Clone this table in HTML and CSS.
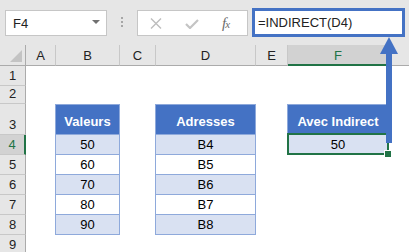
FILE: index.html
```html
<!DOCTYPE html>
<html lang="fr">
<head>
<meta charset="utf-8">
<title>INDIRECT</title>
<link rel="stylesheet" href="styles.css">
</head>
<body>
<div class="app">
  <div class="toolbar">
    <div class="namebox">
      <span>F4</span>
      <svg class="caret" width="8" height="4" viewBox="0 0 8 4"><polygon points="0,0 8,0 4,4" fill="#707070"/></svg>
    </div>
    <div class="grip"><i></i><i></i><i></i></div>
    <div class="fnbox">
      <svg class="ico-x" width="12" height="11" viewBox="0 0 12 11"><path d="M1 0.5 L11 10.5 M11 0.5 L1 10.5" stroke="#bdbdbd" stroke-width="1.4" fill="none"/></svg>
      <svg class="ico-ok" width="14" height="10" viewBox="0 0 14 10"><path d="M1 5 L5 9 L13 1" stroke="#c4c4c4" stroke-width="2.2" fill="none"/></svg>
      <span class="fx">f<small>x</small></span>
    </div>
    <div class="formula">=INDIRECT(D4)</div>
  </div>

  <div class="colheads">
    <div class="ch corner"><svg width="25" height="20" viewBox="0 0 25 20"><polygon points="22,5 22,17 10,17" fill="#c3c3c3"/></svg></div>
    <div class="ch">A</div>
    <div class="ch">B</div>
    <div class="ch">C</div>
    <div class="ch">D</div>
    <div class="ch">E</div>
    <div class="ch active">F</div>
    <div class="ch last"></div>
  </div>

  <div class="sheet">
    <div class="row"><div class="rh">1</div></div>
    <div class="row r2"><div class="rh">2</div></div>
    <div class="row r3">
      <div class="rh">3</div><div></div>
      <div class="t th">Valeurs</div><div></div>
      <div class="t th">Adresses</div><div></div>
      <div class="t th">Avec Indirect</div>
    </div>
    <div class="row">
      <div class="rh act">4</div><div></div>
      <div class="t alt">50</div><div></div>
      <div class="t alt">B4</div><div></div>
      <div class="t alt sel">50</div>
    </div>
    <div class="row">
      <div class="rh">5</div><div></div>
      <div class="t">60</div><div></div>
      <div class="t">B5</div>
    </div>
    <div class="row">
      <div class="rh">6</div><div></div>
      <div class="t alt">70</div><div></div>
      <div class="t alt">B6</div>
    </div>
    <div class="row">
      <div class="rh">7</div><div></div>
      <div class="t">80</div><div></div>
      <div class="t">B7</div>
    </div>
    <div class="row">
      <div class="rh">8</div><div></div>
      <div class="t alt">90</div><div></div>
      <div class="t alt">B8</div>
    </div>
    <div class="row"><div class="rh">9</div></div>
  </div>

  <svg class="arrow" width="409" height="252" viewBox="0 0 409 252">
    <rect x="386" y="52" width="6" height="91" fill="#4472C4"/>
    <polygon points="389,37 380,54 398,54" fill="#4472C4"/>
  </svg>
</div>
</body>
</html>
```

FILE: styles.css
```css
* {
  box-sizing: border-box;
  margin: 0;
  padding: 0;
}

body {
  margin: 0;
  width: 409px;
  height: 252px;
  overflow: hidden;
  background: #fff;
  font-family: "Liberation Sans", Arial, sans-serif;
  font-size: 13px;
  color: #000;
}

.app {
  position: relative;
  width: 409px;
  height: 252px;
  overflow: hidden;
}

/* ---------- toolbar ---------- */
.toolbar {
  height: 45px;
  background: #e6e6e6;
  display: flex;
  align-items: flex-start;
  padding: 10px 0 0 5px;
}

.namebox {
  width: 102px;
  height: 26px;
  background: #fff;
  border: 1px solid #c6c6c6;
  display: flex;
  align-items: center;
  justify-content: space-between;
  padding: 0 6px 0 7px;
  color: #222;
}

.caret {
  margin-top: -2px;
}

.grip {
  width: 30px;
  height: 26px;
  display: flex;
  flex-direction: column;
  align-items: center;
  gap: 2px;
  padding-top: 7px;
}

.grip i {
  display: block;
  width: 2px;
  height: 2px;
  background: #a6a6a6;
}

.fnbox {
  width: 111px;
  height: 26px;
  background: #fff;
  border: 1px solid #c6c6c6;
  display: flex;
  align-items: center;
  padding-left: 12px;
}

.ico-x {
  margin-top: 1px;
}

.ico-ok {
  margin-left: 23px;
  margin-top: 2px;
}

.fx {
  margin-left: 23px;
  font-family: "Liberation Serif", "Times New Roman", serif;
  font-style: italic;
  font-size: 15px;
  color: #6b6b6b;
  letter-spacing: -1px;
}

.fx small {
  font-size: 11px;
}

.formula {
  margin-left: 4px;
  margin-top: -2px;
  width: 153px;
  height: 29px;
  background: #fff;
  border: 3px solid #4472C4;
  padding-left: 3px;
  line-height: 23px;
  color: #222;
}

/* ---------- column headers ---------- */
.colheads {
  display: grid;
  grid-template-columns: 26px 30px 64px 36px 100px 32px 101px 1fr;
  height: 21px;
  background: #e6e6e6;
}

.ch {
  border-right: 1px solid #c8c8c8;
  border-bottom: 1px solid #ababab;
  display: flex;
  align-items: center;
  justify-content: center;
  color: #222;
  padding-top: 1px;
}

.ch.corner {
  border-right-color: #ababab;
  padding: 0;
  align-items: flex-start;
  justify-content: flex-start;
}

.ch.active {
  background: #d2d2d2;
  color: #217346;
  border-bottom: 2px solid #217346;
}

.ch.last {
  border-right: none;
}

/* ---------- sheet ---------- */
.row {
  display: grid;
  grid-template-columns: 26px 29px 65px 35px 101px 31px 102px 1fr;
  height: 20px;
}

.row.r2 {
  height: 18px;
}

.row.r3 {
  height: 31px;
}

.rh {
  background: #e6e6e6;
  border-right: 1px solid #ababab;
  border-bottom: 1px solid #c8c8c8;
  display: flex;
  align-items: flex-end;
  justify-content: center;
  padding-bottom: 2px;
  color: #222;
  line-height: 15px;
}

.rh.act {
  background: #d2d2d2;
  color: #217346;
  border-right: 2px solid #217346;
}

.t {
  border-left: 1px solid #8ea9db;
  border-right: 1px solid #8ea9db;
  border-bottom: 1px solid #8ea9db;
  display: flex;
  align-items: center;
  justify-content: center;
  color: #000;
}

.t.th {
  background: #4472c4;
  border-top: 1px solid #8ea9db;
  color: #fff;
  font-weight: bold;
  padding-top: 3px;
}

.t.alt {
  background: #d9e1f2;
}

.t.sel {
  position: relative;
}

.t.sel::after {
  content: "";
  position: absolute;
  top: -2px;
  left: -1px;
  right: -1px;
  bottom: -1px;
  border: 2px solid #217346;
}

.t.sel::before {
  content: "";
  position: absolute;
  right: -4px;
  bottom: -4px;
  width: 6px;
  height: 6px;
  background: #217346;
  border: 1px solid #fff;
  z-index: 1;
}

/* ---------- annotation arrow ---------- */
.arrow {
  position: absolute;
  left: 0;
  top: 0;
  pointer-events: none;
}
```
